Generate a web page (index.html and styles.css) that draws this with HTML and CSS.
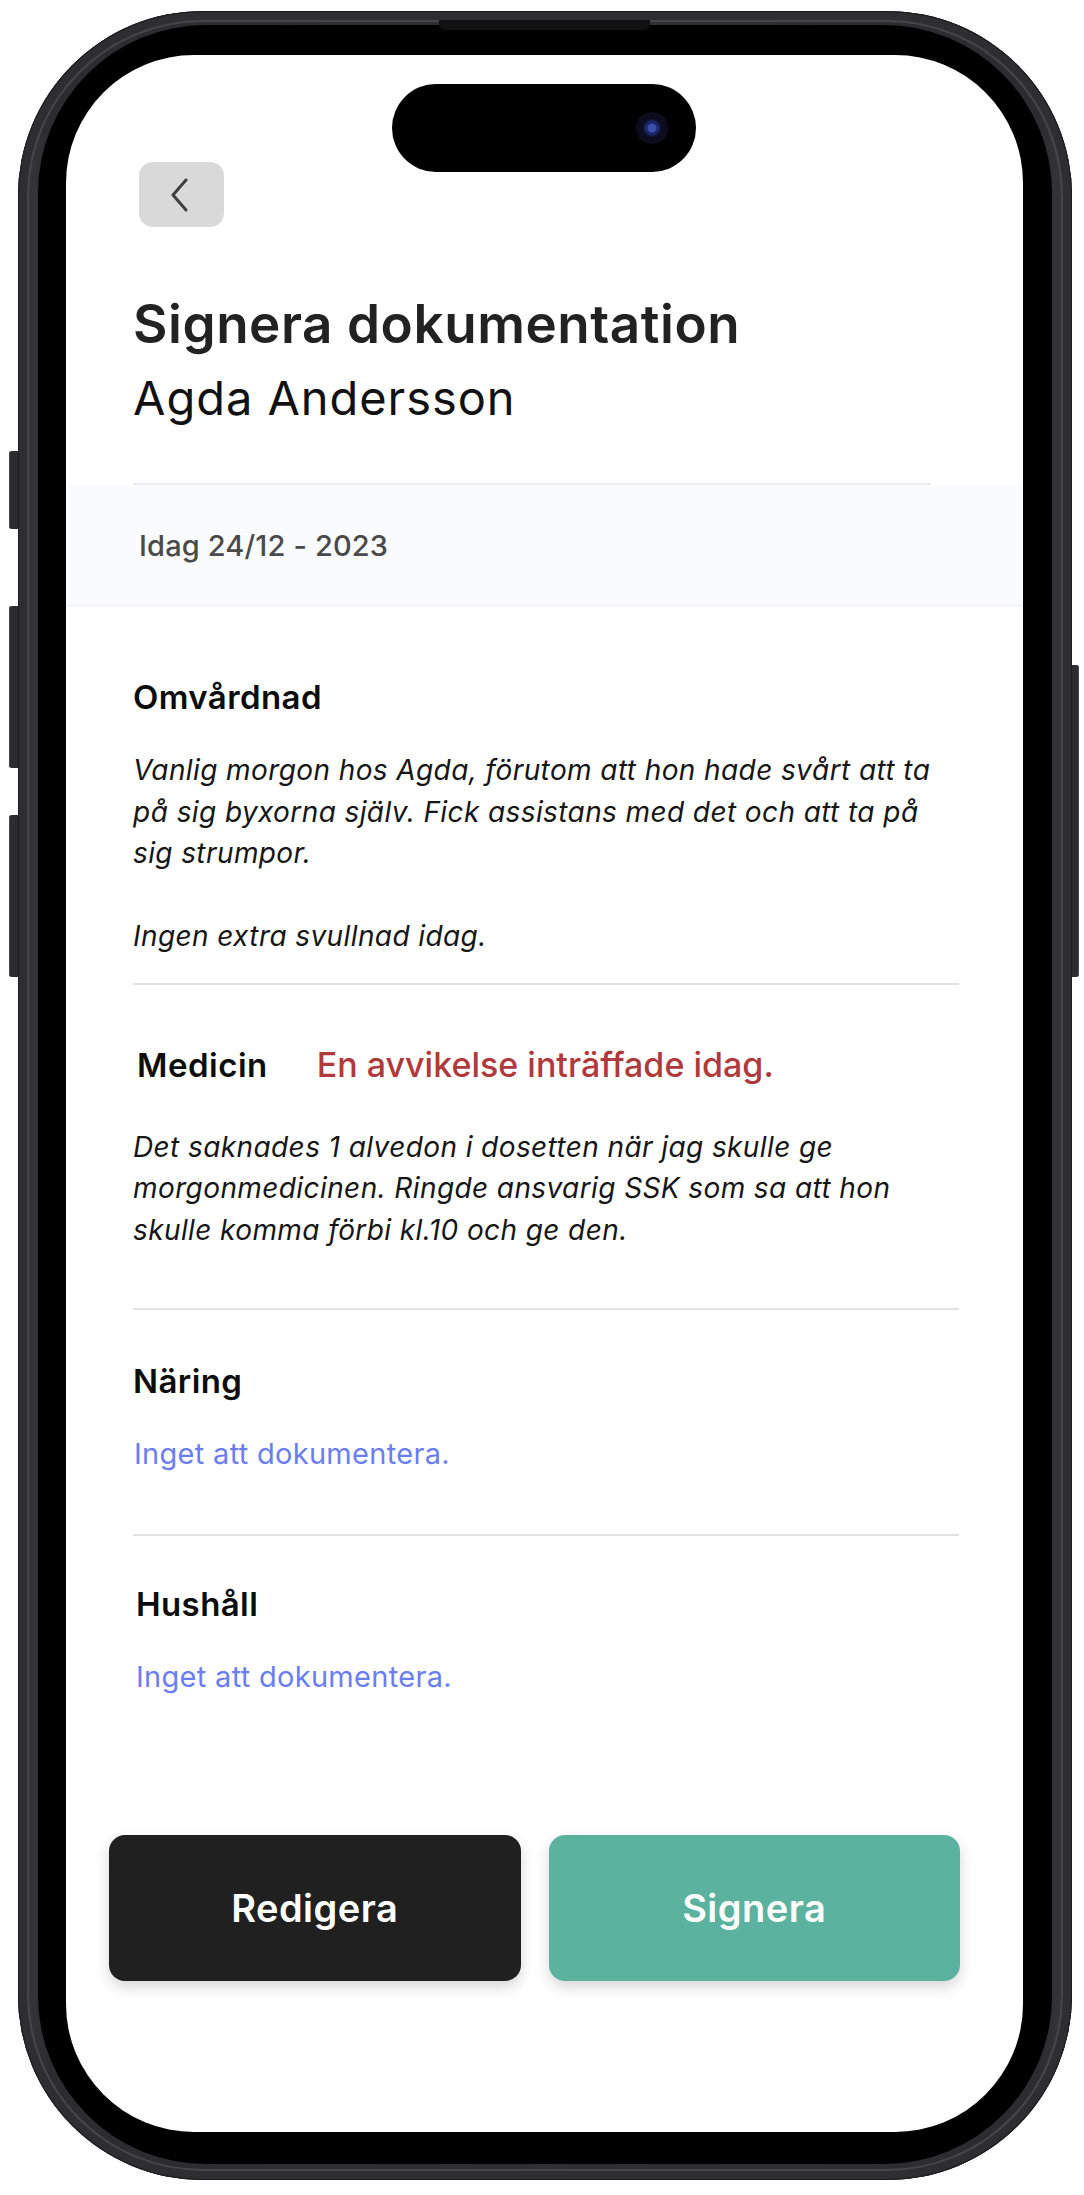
FILE: index.html
```html
<!DOCTYPE html>
<html lang="sv">
<head>
<meta charset="utf-8">
<title>Signera dokumentation</title>
<link rel="stylesheet" href="styles.css">
</head>
<body>
<div class="phone">
  <span class="side side-l1"></span>
  <span class="side side-l2"></span>
  <span class="side side-l3"></span>
  <span class="side side-r1"></span>
  <span class="speaker"></span>
  <div class="bezel">
    <div class="screen">
      <div class="island"><span class="lens"></span></div>
      <header class="top">
        <button class="back" aria-label="Tillbaka">
          <svg width="22" height="34" viewBox="0 0 22 34"><path d="M17 2 L4 17 L17 32" fill="none" stroke="#3f3f3f" stroke-width="3" stroke-linecap="round" stroke-linejoin="round"/></svg>
        </button>
        <h1 class="title">Signera dokumentation</h1>
        <p class="name">Agda Andersson</p>
      </header>
      <div class="rule"></div>
      <div class="dateband"><span class="date">Idag 24/12 - 2023</span></div>
      <main class="entries">
        <section class="entry entry-care">
          <h2 class="heading">Omvårdnad</h2>
          <p class="note">Vanlig morgon hos Agda, förutom att hon hade svårt att ta på sig byxorna själv. Fick assistans med det och att ta på sig strumpor.<br><br>Ingen extra svullnad idag.</p>
        </section>
        <section class="entry entry-med">
          <div class="medrow">
            <h2 class="heading heading-med">Medicin</h2>
            <span class="alert">En avvikelse inträffade idag.</span>
          </div>
          <p class="note note-med">Det saknades 1 alvedon i dosetten när jag skulle ge morgonmedicinen. Ringde ansvarig SSK som sa att hon skulle komma förbi kl.10 och ge den.</p>
        </section>
        <section class="entry entry-food">
          <h2 class="heading">Näring</h2>
          <p class="empty">Inget att dokumentera.</p>
        </section>
        <section class="entry entry-home">
          <h2 class="heading heading-home">Hushåll</h2>
          <p class="empty empty-home">Inget att dokumentera.</p>
        </section>
      </main>
      <div class="actions">
        <button class="btn btn-edit">Redigera</button>
        <button class="btn btn-sign">Signera</button>
      </div>
    </div>
  </div>
</div>
</body>
</html>
```

FILE: styles.css
```css
html, body {
  margin: 0;
  padding: 0;
  background: #ffffff;
}

body {
  font-family: Inter, "Noto Sans", "Liberation Sans", sans-serif;
  color: #111;
}

.phone {
  position: relative;
  box-sizing: border-box;
  width: 1054px;
  height: 2169px;
  margin: 11px 0 0 18px;
  padding: 14px 20px 16px 20px;
  border-radius: 185px;
  background: linear-gradient(90deg, #3a3a3c 0%, #2c2c2e 3%, #303032 50%, #2c2c2e 97%, #3a3a3c 100%);
  box-shadow: inset 0 0 0 1px #1c1c1c, inset 0 0 0 9px #2e2e30, inset 0 0 0 11px #464648;
}

.side {
  position: absolute;
  background: #2c2c2e;
  box-shadow: inset 1px 0 0 #4a4a4c;
}
.side-l1 { left: -9px; top: 440px; width: 9px; height: 78px; border-radius: 3px 0 0 3px; }
.side-l2 { left: -9px; top: 595px; width: 9px; height: 162px; border-radius: 3px 0 0 3px; }
.side-l3 { left: -9px; top: 804px; width: 9px; height: 162px; border-radius: 3px 0 0 3px; }
.side-r1 { right: -7px; top: 654px; width: 7px; height: 312px; border-radius: 0 3px 3px 0; box-shadow: inset -1px 0 0 #4a4a4c; }

.speaker {
  position: absolute;
  left: 421px;
  top: 9px;
  width: 211px;
  height: 10px;
  border-radius: 0 0 6px 6px;
  background: #111;
  z-index: 2;
}

.bezel {
  box-sizing: border-box;
  height: 100%;
  padding: 30px 29px 32px 28px;
  border-radius: 168px;
  background: #000;
}

.screen {
  position: relative;
  width: 957px;
  height: 2077px;
  border-radius: 128px;
  background: #fff;
  overflow: hidden;
}

.island {
  position: absolute;
  left: 326px;
  top: 29px;
  width: 304px;
  height: 88px;
  border-radius: 44px;
  background: #000;
}
.lens {
  position: absolute;
  left: 243px;
  top: 27px;
  width: 34px;
  height: 34px;
  border-radius: 50%;
  background: radial-gradient(circle at 50% 50%, #3a4fa8 0 4px, #1a2466 5px 7px, #0b0d1e 9px 15px, #000 17px);
}

/* header */
.top {
  padding: 107px 0 0 67px;
}
.back {
  display: flex;
  align-items: center;
  justify-content: center;
  width: 85px;
  height: 65px;
  margin: 0 0 0 6px;
  padding: 0 4px 0 0;
  border: 0;
  border-radius: 14px;
  background: #d9d9d9;
}
.title {
  margin: 67px 0 0;
  font-size: 53px;
  line-height: 60px;
  font-weight: 600;
  color: #222;
  letter-spacing: 0.55px;
}
.name {
  margin: 14px 0 0;
  font-size: 47px;
  line-height: 60px;
  font-weight: 400;
  color: #111;
  letter-spacing: 0.95px;
}

.rule {
  height: 2px;
  margin: 55px 0 0 67px;
  width: 798px;
  background: #ececec;
}

.dateband {
  display: flex;
  align-items: center;
  height: 120px;
  padding-left: 73px;
  background: #fafbfd;
  border-bottom: 1px solid #eeeeee;
}
.date {
  font-size: 29px;
  font-weight: 500;
  color: #4a4a4a;
  letter-spacing: 0.15px;
}

/* entries */
.entries {
  margin: 0 64px 0 67px;
}
.entry {
  border-bottom: 2px solid #e2e2e2;
}
.entry:last-child {
  border-bottom: 0;
}
.entry-care { padding: 73px 0 25px; }
.entry-med { padding: 60px 0 57px; }
.entry-food { padding: 53px 0 62px; }
.entry-home { padding: 50px 0 0; }

.heading {
  margin: 0;
  font-size: 33px;
  line-height: 36px;
  font-weight: 600;
  color: #0d0d0d;
  letter-spacing: 0.4px;
}
.heading-home { margin-left: 3px; }

.note {
  margin: 35px 0 0;
  font-size: 28px;
  line-height: 41.5px;
  font-style: italic;
  color: #161616;
  letter-spacing: 0.4px;
}
.note-med { margin-top: 42px; }

.medrow {
  display: flex;
  align-items: baseline;
  gap: 49px;
  padding-left: 4px;
}
.heading-med {
  font-size: 33px;
  line-height: 40px;
  letter-spacing: 0.5px;
}
.alert {
  font-size: 34px;
  line-height: 40px;
  font-weight: 500;
  color: #b0393b;
  letter-spacing: 0;
}

.empty {
  margin: 37px 0 0 1px;
  font-size: 29px;
  line-height: 36px;
  color: #6b7ef1;
  letter-spacing: 0.3px;
}
.empty-home { margin: 37px 0 0 3px; }

/* actions */
.actions {
  display: flex;
  gap: 28px;
  margin: 140px 63px 0 43px;
}
.btn {
  flex: 1;
  height: 146px;
  border: 0;
  border-radius: 16px;
  font-family: Inter, "Noto Sans", sans-serif;
  font-size: 38px;
  font-weight: 600;
  color: #fff;
  letter-spacing: 0.5px;
  box-shadow: 0 6px 14px rgba(0, 0, 0, 0.16);
}
.btn-edit { background: #202020; }
.btn-sign { background: #5bb29e; }
```
